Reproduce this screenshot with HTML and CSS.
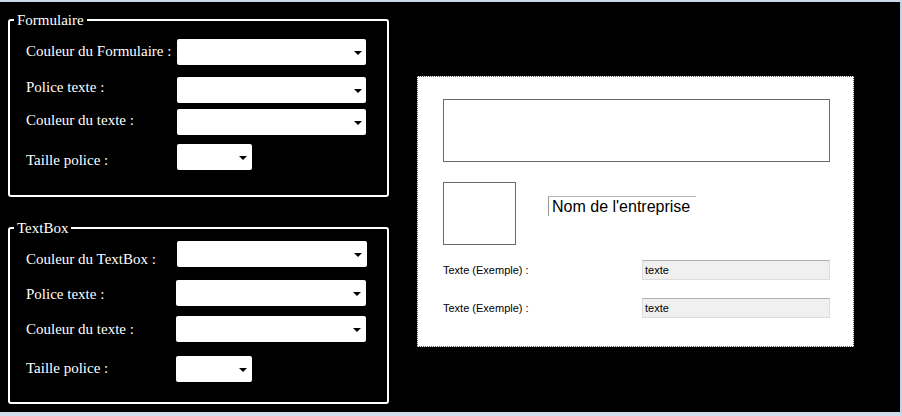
FILE: index.html
```html
<!DOCTYPE html>
<html lang="fr">
<head>
<meta charset="utf-8">
<title>Paramètres</title>
<link rel="stylesheet" href="styles.css">
</head>
<body>
<div class="window">
  <div class="left">
    <fieldset class="group g1">
      <legend>Formulaire</legend>
      <div class="row r1"><span class="lbl p3">Couleur du Formulaire :</span><div class="combo"><i class="arrow"></i></div></div>
      <div class="row r2"><span class="lbl p1">Police texte :</span><div class="combo"><i class="arrow"></i></div></div>
      <div class="row r3"><span class="lbl p2">Couleur du texte :</span><div class="combo"><i class="arrow"></i></div></div>
      <div class="row r4"><span class="lbl p7">Taille police :</span><div class="combo small"><i class="arrow"></i></div></div>
    </fieldset>
    <fieldset class="group g2">
      <legend>TextBox</legend>
      <div class="row t1"><span class="lbl p9">Couleur du TextBox :</span><div class="combo wide"><i class="arrow"></i></div></div>
      <div class="row t2 shift"><span class="lbl p5">Police texte :</span><div class="combo wide"><i class="arrow"></i></div></div>
      <div class="row t3 shift"><span class="lbl p4">Couleur du texte :</span><div class="combo wide"><i class="arrow"></i></div></div>
      <div class="row t4 shift"><span class="lbl p3">Taille police :</span><div class="combo small2"><i class="arrow"></i></div></div>
    </fieldset>
  </div>
  <div class="preview">
    <div class="banner"></div>
    <div class="brand">
      <div class="logo"></div>
      <div class="company">Nom de l'entreprise</div>
    </div>
    <div class="field f1"><span class="flabel">Texte (Exemple) :</span><div class="tbox">texte</div></div>
    <div class="field f2"><span class="flabel">Texte (Exemple) :</span><div class="tbox">texte</div></div>
  </div>
</div>
</body>
</html>
```
FILE: styles.css
```css
html, body {
  margin: 0;
  padding: 0;
  background: #000;
}
.window {
  width: 902px;
  height: 416px;
  box-sizing: border-box;
  border-top: 2px solid #cad9e9;
  border-right: 2px solid #c3d3e5;
  border-bottom: 4px solid #cfdded;
  padding-left: 8px;
  display: flex;
  align-items: flex-start;
  background: #000;
  font-family: "Liberation Serif", "Times New Roman", serif;
  color: #fff;
}
.left {
  width: 381px;
  display: flex;
  flex-direction: column;
}
.group {
  margin: 0;
  padding: 0 0 25px 4px;
  border: 2px solid #fff;
  border-radius: 3px;
  min-width: 0;
  width: 381px;
  box-sizing: border-box;
}
.g1 { margin-top: 10px; }
.g2 { margin-top: 23px; padding-bottom: 20px; }
.group legend {
  padding: 0 3px;
  font-size: 15px;
  line-height: 16px;
  color: #fff;
}
.row {
  display: grid;
  grid-template-columns: 151px auto;
  align-items: start;
  margin-left: 12px;
  height: 26px;
}
.row.shift { grid-template-columns: 150px auto; }
.r1 { margin-top: 11px; }
.r2 { margin-top: 12px; }
.r3 { margin-top: 6px; }
.r4 { margin-top: 9px; }
.t1 { margin-top: 5px; }
.t2 { margin-top: 13px; }
.t3 { margin-top: 10px; }
.t4 { margin-top: 14px; }
.lbl {
  font-size: 15px;
  line-height: 18px;
  white-space: nowrap;
}
.p1 { padding-top: 1px; }
.p2 { padding-top: 2px; }
.p3 { padding-top: 3px; }
.p4 { padding-top: 4px; }
.p5 { padding-top: 5px; }
.p7 { padding-top: 7px; }
.p9 { padding-top: 9px; }
.combo {
  width: 189px;
  height: 26px;
  background: #fff;
  border-radius: 2px;
  display: flex;
  align-items: center;
  justify-content: flex-end;
  padding-right: 4px;
  box-sizing: border-box;
}
.combo.wide { width: 190px; padding-right: 5px; }
.combo.small { width: 75px; padding-right: 5px; }
.combo.small2 { width: 76px; padding-right: 5px; }
.arrow {
  width: 0;
  height: 0;
  border-left: 4px solid transparent;
  border-right: 4px solid transparent;
  border-top: 4px solid #000;
  margin-top: 2px;
}
.preview {
  margin-left: 28px;
  margin-top: 74px;
  width: 437px;
  height: 271px;
  box-sizing: border-box;
  background: #fff;
  border: 1px dotted #555;
  padding: 22px 0 0 25px;
  color: #000;
}
.banner {
  width: 387px;
  height: 63px;
  box-sizing: border-box;
  border: 1px solid #6a6a6a;
}
.brand {
  display: flex;
  align-items: flex-start;
  margin-top: 20px;
}
.logo {
  width: 73px;
  height: 63px;
  box-sizing: border-box;
  border: 1px solid #6a6a6a;
}
.company {
  margin-left: 32px;
  margin-top: 14px;
  width: 148px;
  height: 20px;
  box-sizing: border-box;
  border-left: 1px solid #9a9a9a;
  border-top: 1px solid #b4b4b4;
  padding-left: 3px;
  font-family: "Liberation Sans", Arial, sans-serif;
  font-size: 16px;
  line-height: 19px;
  color: #000;
  white-space: nowrap;
}
.field {
  display: flex;
  align-items: center;
  height: 20px;
}
.f1 { margin-top: 15px; }
.f2 { margin-top: 18px; }
.flabel {
  width: 199px;
  font-family: "Liberation Sans", Arial, sans-serif;
  font-size: 11px;
}
.tbox {
  width: 188px;
  height: 20px;
  box-sizing: border-box;
  background: #f0f0f0;
  border: 1px solid #dcdcdc;
  border-top-color: #b0b0b0;
  padding-left: 2px;
  font-family: "Liberation Sans", Arial, sans-serif;
  font-size: 11px;
  line-height: 18px;
}
```
